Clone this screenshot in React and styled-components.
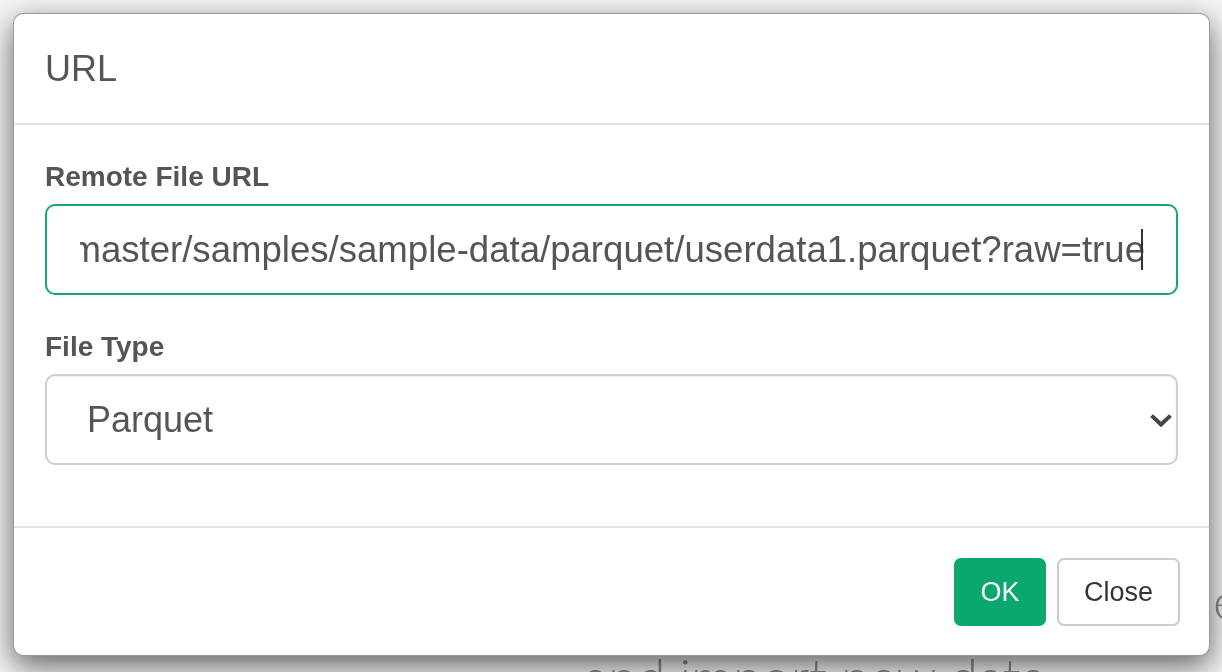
import React from 'react';
import styled, { createGlobalStyle } from 'styled-components';

const GlobalStyle = createGlobalStyle`
  html, body {
    margin: 0;
    padding: 0;
    height: 100%;
    overflow: hidden;
    background: #f4f4f4;
    font-family: "Liberation Sans", Arial, Helvetica, sans-serif;
  }
  * { box-sizing: border-box; }
`;

const Page = styled.div`
  width: 1222px;
  height: 672px;
  overflow: hidden;
  padding-top: 562px;
  font-family: Lato, "Liberation Sans", sans-serif;
  font-weight: 300;
  font-size: 52px;
  line-height: 76px;
  color: #8a8a8a;
`;

const HeroLine = styled.div`
  white-space: nowrap;
  width: 1240px;
  text-align: ${(p) => (p.$right ? 'right' : 'left')};
  padding-left: ${(p) => (p.$right ? '0' : '583px')};
`;

const Dialog = styled.div`
  position: fixed;
  top: 13px;
  left: 13px;
  width: 1197px;
  background: #fff;
  border: 1px solid rgba(0, 0, 0, 0.4);
  border-radius: 10px;
  box-shadow: 0 10px 30px rgba(0, 0, 0, 0.6);
  display: flex;
  flex-direction: column;
`;

const Header = styled.div`
  height: 111px;
  padding: 37px 31px 0;
  border-bottom: 2px solid #e5e5e5;
`;

const Title = styled.h4`
  margin: 0;
  font-size: 36px;
  line-height: 36px;
  font-weight: 400;
  color: #555;
`;

const Body = styled.div`
  padding: 38px 31px 61px;
  display: flex;
  flex-direction: column;
`;

const Label = styled.label`
  display: block;
  font-size: 28px;
  line-height: 27px;
  font-weight: 700;
  color: #555;
  margin: ${(p) => (p.$first ? '0' : '38px')} 0 14px;
`;

const UrlField = styled.div`
  height: 91px;
  border: 2px solid #17a673;
  border-radius: 10px;
  padding: 0 31px 0 33px;
  display: flex;
  align-items: center;
`;

const Scroller = styled.div`
  flex: 1;
  overflow: hidden;
  display: flex;
  justify-content: flex-end;
  align-items: center;
`;

const UrlText = styled.span`
  flex-shrink: 0;
  white-space: nowrap;
  font-size: 36.6px;
  color: #555;
`;

const Caret = styled.span`
  flex-shrink: 0;
  width: 2px;
  height: 41px;
  margin-left: -4px;
  margin-right: 2px;
  background: #333;
`;

const SelectWrap = styled.div`
  position: relative;
`;

const Select = styled.select`
  width: 100%;
  height: 91px;
  appearance: none;
  -webkit-appearance: none;
  background: #fff;
  border: 2px solid #cfcfcf;
  border-radius: 10px;
  box-shadow: inset 0 1px 2px rgba(0, 0, 0, 0.06);
  padding: 0 40px;
  font-family: "Liberation Sans", Arial, sans-serif;
  font-size: 36px;
  color: #555;
  outline: none;
`;

const Chevron = styled.svg`
  position: absolute;
  right: 6px;
  top: 40px;
  pointer-events: none;
`;

const Footer = styled.div`
  border-top: 2px solid #e5e5e5;
  padding: 30px 29px 29px;
  display: flex;
  justify-content: flex-end;
  gap: 11px;
`;

const Button = styled.button`
  height: 68px;
  width: ${(p) => (p.$primary ? '92px' : '123px')};
  border-radius: 7px;
  border: 2px solid ${(p) => (p.$primary ? '#0aa86d' : '#cccccc')};
  background: ${(p) => (p.$primary ? '#0aa86d' : '#ffffff')};
  color: ${(p) => (p.$primary ? '#ffffff' : '#333333')};
  font-family: "Liberation Sans", Arial, sans-serif;
  font-size: 27px;
  padding: 0;
  cursor: pointer;
`;

export default function App() {
  return (
    <>
      <GlobalStyle />
      <Page>
        <HeroLine $right>Point to a file that lives online, preview the data file</HeroLine>
        <HeroLine>and import new data</HeroLine>
      </Page>
      <Dialog>
        <Header>
          <Title>URL</Title>
        </Header>
        <Body>
          <Label $first>Remote File URL</Label>
          <UrlField>
            <Scroller>
              <UrlText>
                https://github.com/exploratory-io/tam/blob/master/samples/sample-data/parquet/userdata1.parquet?raw=true
              </UrlText>
              <Caret />
            </Scroller>
          </UrlField>
          <Label>File Type</Label>
          <SelectWrap>
            <Select defaultValue="parquet">
              <option value="csv">CSV</option>
              <option value="excel">Excel</option>
              <option value="json">JSON</option>
              <option value="parquet">Parquet</option>
            </Select>
            <Chevron width="22" height="14" viewBox="0 0 22 14">
              <polyline
                points="3,3 11,10.5 19,3"
                fill="none"
                stroke="#444"
                strokeWidth="4"
                strokeLinecap="square"
              />
            </Chevron>
          </SelectWrap>
        </Body>
        <Footer>
          <Button $primary>OK</Button>
          <Button>Close</Button>
        </Footer>
      </Dialog>
    </>
  );
}
